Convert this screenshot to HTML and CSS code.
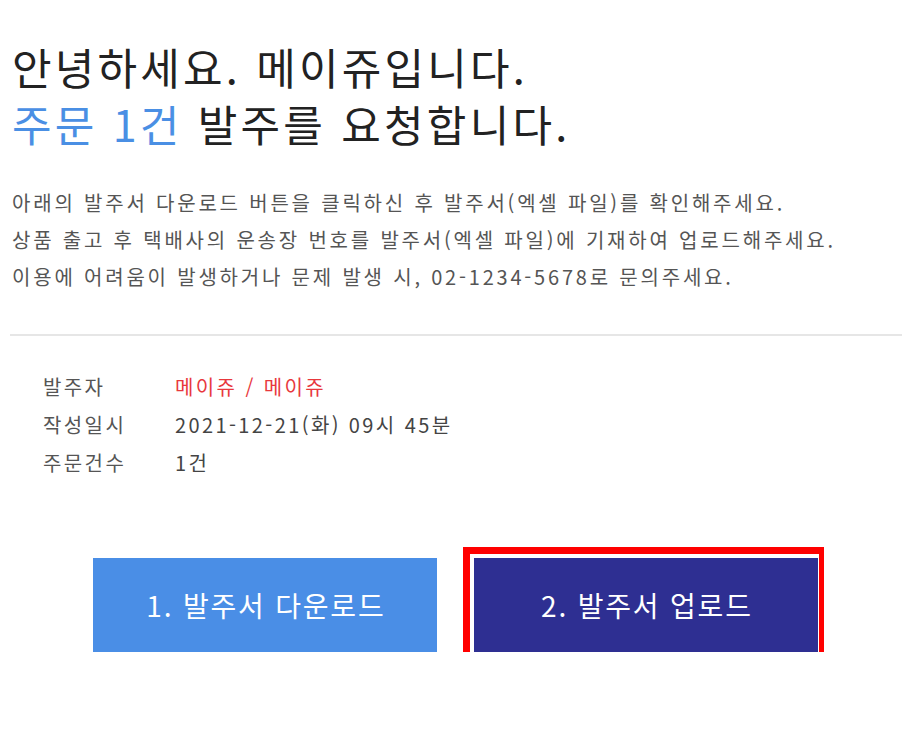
FILE: index.html
```html
<!DOCTYPE html>
<html lang="ko">
<head>
<meta charset="utf-8">
<link rel="stylesheet" href="styles.css">
</head>
<body>
<div class="page">
  <h1 class="title">
    <span class="line">안녕하세요. 메이쥬입니다.</span>
    <span class="line"><span class="accent">주문 1건</span> 발주를 요청합니다.</span>
  </h1>
  <div class="desc">
    <p>아래의 발주서 다운로드 버튼을 클릭하신 후 발주서(엑셀 파일)를 확인해주세요.</p>
    <p>상품 출고 후 택배사의 운송장 번호를 발주서(엑셀 파일)에 기재하여 업로드해주세요.</p>
    <p>이용에 어려움이 발생하거나 문제 발생 시, 02-1234-5678로 문의주세요.</p>
  </div>
  <hr class="divider">
  <dl class="info">
    <div class="row"><dt>발주자</dt><dd class="red">메이쥬 / 메이쥬</dd></div>
    <div class="row"><dt>작성일시</dt><dd>2021-12-21(화) 09시 45분</dd></div>
    <div class="row"><dt>주문건수</dt><dd>1건</dd></div>
  </dl>
  <div class="actions">
    <a class="btn btn-light">1. 발주서 다운로드</a>
    <a class="btn btn-dark">2. 발주서 업로드<span class="highlight"></span></a>
  </div>
</div>
</body>
</html>
```
FILE: styles.css
```css
html, body {
  margin: 0;
  padding: 0;
  background: #ffffff;
}
body {
  font-family: "Noto Sans CJK KR", "Noto Sans", sans-serif;
  color: #333;
}
.page {
  padding: 0 4px 0 10px;
}
.title {
  margin: 0;
  padding-top: 38px;
  padding-left: 2px;
  font-size: 43px;
  font-weight: 400;
  line-height: 57px;
  letter-spacing: 3.2px;
  color: #222;
}
.title .line {
  display: block;
}
.accent {
  color: #4a8fe4;
}
.desc {
  margin-top: 32px;
  padding-left: 2px;
  font-size: 20px;
  line-height: 37px;
  letter-spacing: 2.8px;
  color: #555;
}
.desc p {
  margin: 0;
  white-space: nowrap;
}
.divider {
  margin: 39px 0 0 0;
  border: 0;
  border-top: 2px solid #e6e6e6;
  height: 0;
}
.info {
  margin: 32px 0 0 33px;
  font-size: 20px;
  line-height: 38px;
  letter-spacing: 2.4px;
  color: #555;
}
.row {
  display: flex;
}
.info dt {
  width: 132px;
}
.info dd {
  margin: 0;
  color: #444;
}
.info dd.red {
  color: #e8383d;
}
.actions {
  display: flex;
  gap: 37px;
  margin-top: 76px;
  padding-left: 83px;
}
.btn {
  position: relative;
  display: flex;
  align-items: center;
  justify-content: center;
  width: 344px;
  height: 94px;
  font-size: 28px;
  letter-spacing: 1.8px;
  text-indent: 1.8px;
  color: #fff;
}
.btn-light {
  background: #4a8ee6;
}
.btn-dark {
  background: #2e2f92;
}
.highlight {
  position: absolute;
  left: -11px;
  top: -11px;
  right: -6px;
  bottom: -12px;
  border: 7px solid #ff0000;
  border-right-width: 5px;
}
```
